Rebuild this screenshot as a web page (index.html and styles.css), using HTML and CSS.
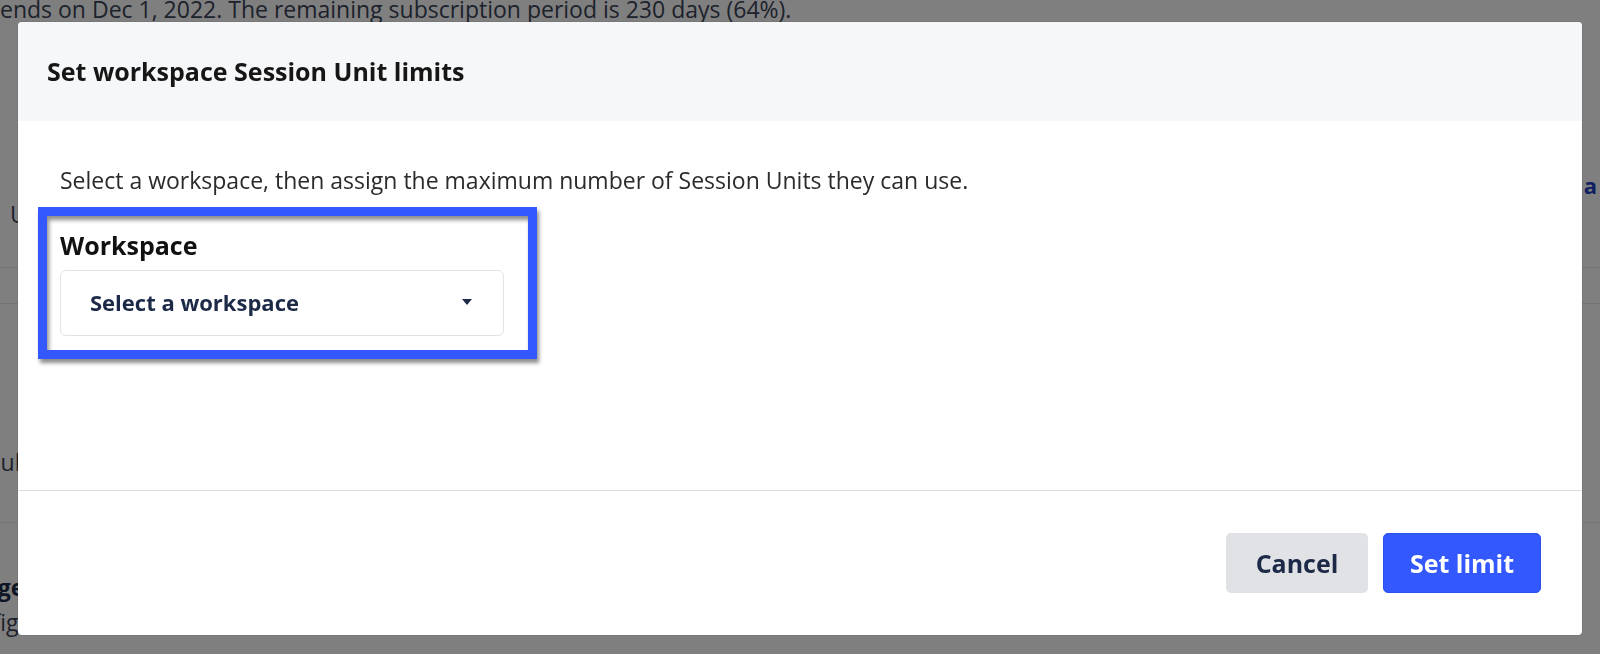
FILE: index.html
```html
<!DOCTYPE html>
<html lang="en">
<head>
  <meta charset="UTF-8">
  <title>Set workspace Session Unit limits</title>
  <link rel="stylesheet" href="styles.css">
</head>
<body>
  <!-- page behind the dialog -->
  <div class="page">
    <p class="page-note">ends on Dec 1, 2022. The remaining subscription period is 230 days (64%).</p>
    <div class="page-row page-row-link">
      <a class="page-link" href="#">a</a>
    </div>
    <div class="page-row page-row-unit">
      <span class="page-text">Unlimited</span>
    </div>
    <div class="page-rule"></div>
    <div class="page-rule page-rule-2"></div>
    <div class="page-row page-row-sub">
      <span class="page-text cut-sub">Subscription</span>
    </div>
    <div class="page-rule page-rule-3"></div>
    <div class="page-row page-row-usage">
      <span class="page-head cut-usage">Usage</span>
    </div>
    <div class="page-row page-row-last">
      <span class="page-text cut-config">Configure</span>
    </div>
  </div>

  <div class="overlay"></div>

  <div class="modal">
    <div class="modal-header">
      <h2>Set workspace Session Unit limits</h2>
    </div>

    <div class="modal-body">
      <p class="intro">Select a workspace, then assign the maximum number of Session Units they can use.</p>

      <div class="field">
        <label class="field-label">Workspace</label>
        <div class="select">
          <span>Select a workspace</span>
          <span class="caret"></span>
        </div>
      </div>
    </div>

    <div class="modal-footer">
      <button class="btn btn-cancel">Cancel</button>
      <button class="btn btn-primary">Set limit</button>
    </div>
  </div>
</body>
</html>
```

FILE: styles.css
```css
* {
  box-sizing: border-box;
}
html, body {
  height: 100%;
}
body {
  margin: 0;
  overflow: hidden;
  background: #fff;
  font-family: 'Open Sans', 'Liberation Sans', sans-serif;
  color: #1b1b1b;
}

/* background page */
.page {
  color: #3b4458;
  font-size: 23px;
}
.page-note {
  margin: -3px 0 0 0;
  line-height: 24px;
  white-space: nowrap;
}
.page-row {
  display: flex;
  white-space: nowrap;
  line-height: 26px;
}
.page-row-link {
  justify-content: flex-end;
  margin-top: 151px;
  padding-right: 3px;
}
.page-link {
  color: #1d3ec4;
  font-weight: bold;
  font-size: 22px;
  text-decoration: none;
}
.page-row-unit {
  margin-top: 3px;
}
.page-text {
  padding-left: 10px;
}
.cut-sub {
  padding-left: 0;
  margin-left: -12px;
}
.cut-config {
  padding-left: 0;
  margin-left: -50px;
}
.page-rule {
  height: 1px;
  background: #e9e9ec;
  margin-top: 40px;
}
.page-rule-2 {
  margin-top: 35px;
}
.page-row-sub {
  margin-top: 145px;
}
.page-rule-3 {
  margin-top: 47px;
}
.page-row-usage {
  margin-top: 51px;
}
.page-head {
  font-weight: bold;
  color: #1c2a48;
}
.cut-usage {
  margin-left: -45px;
}
.page-row-last {
  margin-top: 9px;
}

.overlay {
  position: fixed;
  inset: 0;
  background: rgba(0, 0, 0, 0.5);
}

/* dialog */
.modal {
  position: fixed;
  left: 18px;
  top: 22px;
  width: 1564px;
  height: 613px;
  background: #fff;
  border-radius: 4px;
  overflow: hidden;
  display: flex;
  flex-direction: column;
  box-shadow: 0 0 0 1px rgba(0, 0, 0, 0.06);
}
.modal-header {
  height: 99px;
  flex-shrink: 0;
  background: #f6f7f9;
  padding-left: 29px;
  display: flex;
  align-items: center;
}
.modal-header h2 {
  margin: 0 0 2px;
  font-size: 25px;
  font-weight: bold;
  color: #161616;
}
.modal-body {
  flex: 1;
  padding: 46px 42px 0;
}
.intro {
  margin: 0;
  font-size: 23px;
  line-height: 26px;
  color: #2b2b2b;
}
.field {
  position: relative;
  width: 444px;
  margin-top: 38px;
}
.field::before {
  content: '';
  position: absolute;
  left: -22px;
  top: -24px;
  right: -33px;
  bottom: -23px;
  border: 9px solid #3358ff;
  box-shadow: 2px 4px 4px rgba(0, 0, 0, 0.45), inset 2px 4px 4px rgba(0, 0, 0, 0.45);
  pointer-events: none;
}
.field-label {
  display: block;
  font-size: 25px;
  font-weight: bold;
  line-height: 28px;
  color: #111;
  margin-bottom: 11px;
}
.select {
  height: 66px;
  border: 1px solid #e1e3e8;
  border-radius: 6px;
  display: flex;
  align-items: center;
  justify-content: space-between;
  padding: 0 31px 2px 29px;
  font-size: 22px;
  font-weight: bold;
  color: #1c2a48;
}
.caret {
  width: 0;
  height: 0;
  border-left: 5px solid transparent;
  border-right: 5px solid transparent;
  border-top: 6px solid #1c2a48;
}
.modal-footer {
  flex-shrink: 0;
  border-top: 1px solid #dcdde1;
  padding: 42px 41px;
  display: flex;
  justify-content: flex-end;
  gap: 15px;
}
.btn {
  height: 60px;
  border-radius: 5px;
  border: none;
  font-family: inherit;
  font-size: 25px;
  font-weight: bold;
  cursor: pointer;
}
.btn-cancel {
  width: 142px;
  background: #e0e2e6;
  color: #1c2a48;
}
.btn-primary {
  width: 158px;
  background: #3358fe;
  border: 1px solid #2a4ef0;
  color: #fff;
}
```
